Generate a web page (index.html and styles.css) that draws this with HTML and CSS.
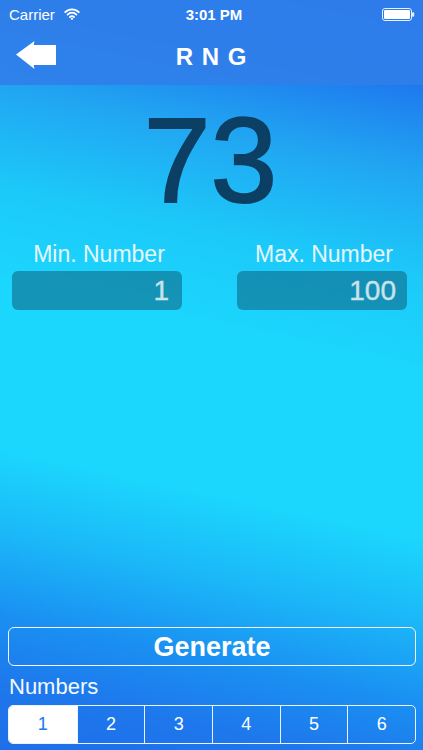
FILE: index.html
```html
<!DOCTYPE html>
<html>
<head>
<meta charset="utf-8">
<link rel="stylesheet" href="styles.css">
</head>
<body>
<div class="screen">
  <header class="topbar">
    <div class="status">
      <div class="status-left">
        <span class="carrier">Carrier</span>
        <svg class="wifi" width="16" height="12" viewBox="0 0 16 12">
          <path d="M1.2 4.2 A9.5 9.5 0 0 1 14.8 4.2" fill="none" stroke="#fff" stroke-width="1.8" stroke-linecap="round"/>
          <path d="M3.6 6.6 A6 6 0 0 1 12.4 6.6" fill="none" stroke="#fff" stroke-width="1.8" stroke-linecap="round"/>
          <path d="M6 9 A2.8 2.8 0 0 1 10 9" fill="none" stroke="#fff" stroke-width="1.8" stroke-linecap="round"/>
          <circle cx="8" cy="10.8" r="1.1" fill="#fff"/>
        </svg>
      </div>
      <span class="time">3:01 PM</span>
      <div class="status-right">
        <svg class="battery" width="33" height="13" viewBox="0 0 33 13">
          <rect x="0.5" y="0.5" width="29" height="12" rx="2.5" fill="none" stroke="#e8f1ff" stroke-width="1"/>
          <rect x="2" y="2" width="26" height="9" rx="1.2" fill="#fff"/>
          <rect x="30" y="4.2" width="2.2" height="4.6" rx="1" fill="#e8f1ff"/>
        </svg>
      </div>
    </div>
    <div class="nav">
      <svg class="back" width="42" height="30" viewBox="0 0 42 30">
        <path d="M1 14.5 L19.5 1 Q18.5 5 19 5 L41 5 L41 25 L19 25 Q18.5 25 19.5 29 Z" fill="#fff"/>
      </svg>
      <h1 class="title">R N G</h1>
    </div>
  </header>

  <main class="content">
    <div class="result">73</div>
    <div class="range">
      <div class="field">
        <div class="field-label">Min. Number</div>
        <div class="field-box">1</div>
      </div>
      <div class="field">
        <div class="field-label">Max. Number</div>
        <div class="field-box">100</div>
      </div>
    </div>
  </main>

  <footer class="controls">
    <button class="generate">Generate</button>
    <div class="numbers-label">Numbers</div>
    <div class="segmented">
      <div class="seg selected">1</div>
      <div class="seg">2</div>
      <div class="seg">3</div>
      <div class="seg">4</div>
      <div class="seg">5</div>
      <div class="seg">6</div>
    </div>
  </footer>
</div>
</body>
</html>
```
FILE: styles.css
```css
* { box-sizing: border-box; }
html, body {
  margin: 0;
  padding: 0;
}
body {
  width: 423px;
  height: 750px;
  overflow: hidden;
  font-family: "Liberation Sans", Arial, sans-serif;
  color: #fff;
}
.screen {
  width: 423px;
  height: 750px;
  display: flex;
  flex-direction: column;
  background: linear-gradient(192deg,
    #1a66f0 0%,
    #1e78ee 10%,
    #21a6f2 21%,
    #1cc9f9 33%,
    #1bd6fd 44%,
    #1bd7fd 64%,
    #1bb8f8 74%,
    #1a8ff2 84%,
    #1e78ec 92%,
    #1f6ee8 100%);
}
.topbar {
  height: 85px;
  background: rgba(48, 126, 233, 0.9);
  display: flex;
  flex-direction: column;
}
.status {
  height: 28px;
  display: flex;
  align-items: center;
  justify-content: space-between;
  padding: 0 8px 0 9px;
  font-size: 15px;
}
.status-left {
  display: flex;
  align-items: center;
  gap: 9px;
  width: 120px;
}
.wifi { margin-top: -1px; }
.time {
  font-weight: bold;
  font-size: 15px;
  margin-left: 4px;
}
.status-right {
  width: 120px;
  display: flex;
  justify-content: flex-end;
}
.nav {
  flex: 1;
  display: flex;
  align-items: center;
  position: relative;
  padding-left: 15px;
  padding-bottom: 3px;
}
.back {
  display: block;
}
.title {
  position: absolute;
  left: 0;
  right: 0;
  top: 14px;
  margin: 0;
  text-align: center;
  font-size: 24px;
  font-weight: bold;
  letter-spacing: 1px;
  line-height: 30px;
  pointer-events: none;
}
.content {
  padding-top: 15px;
}
.result {
  text-align: center;
  font-size: 120px;
  line-height: 120px;
  color: #0b3f64;
  -webkit-text-stroke: 2px #0b3f64;
  text-shadow: 0 0 2px rgba(150, 215, 255, 0.6);
  margin-left: -2px;
}
.range {
  display: grid;
  grid-template-columns: 170px 170px;
  column-gap: 55px;
  padding: 0 16px 0 12px;
  margin-top: 21px;
}
.field {
  display: flex;
  flex-direction: column;
  gap: 4px;
}
.field-label {
  text-align: center;
  font-size: 23px;
  line-height: 26px;
  color: #e3f6fd;
  padding-left: 4px;
}
.field-box {
  height: 39px;
  border-radius: 6px;
  background: rgba(14, 95, 125, 0.55);
  color: #c9e3ea;
  font-size: 28px;
  line-height: 39px;
  text-align: right;
  padding-right: 11px;
  -webkit-text-stroke: 0.4px #c9e3ea;
}
.field:first-child .field-box { padding-right: 13px; }
.controls {
  margin-top: auto;
  padding: 0 7px 6px 8px;
  display: flex;
  flex-direction: column;
}
.generate {
  height: 39px;
  border: 1.5px solid #f2f8ff;
  border-radius: 6px;
  background: transparent;
  color: #fff;
  font-family: "Liberation Sans", Arial, sans-serif;
  font-size: 27px;
  font-weight: bold;
  padding: 0;
  line-height: 36px;
}
.numbers-label {
  font-size: 22px;
  line-height: 26px;
  margin-top: 8px;
  padding-left: 1px;
  color: #f4faff;
}
.segmented {
  margin-top: 5px;
  height: 39px;
  display: grid;
  grid-template-columns: repeat(6, 1fr);
  border: 1.5px solid #eaf3ff;
  border-radius: 5px;
  overflow: hidden;
}
.seg {
  display: flex;
  align-items: center;
  justify-content: center;
  font-size: 18px;
  color: #fff;
  border-left: 1.5px solid #eaf3ff;
}
.seg:first-child { border-left: none; }
.seg.selected {
  background: #fff;
  color: #2079e6;
}
```
